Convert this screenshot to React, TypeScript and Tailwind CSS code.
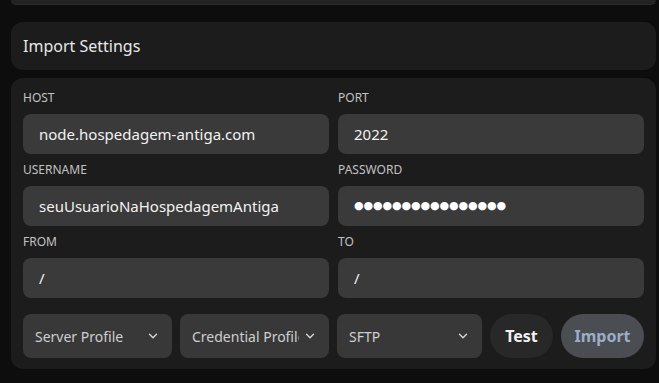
import React from 'react';
import { ChevronDown } from 'lucide-react';

const font = { fontFamily: '"Noto Sans", "Open Sans", sans-serif' };

const Field: React.FC<{ label: string; children: React.ReactNode }> = ({ label, children }) => (
  <div className="flex flex-col">
    <span className="text-[12px] leading-4 text-[#c2c2c2] mb-2">{label}</span>
    <div className="h-10 rounded-lg bg-[#3a3a3a] px-4 flex items-center text-[15px] text-[#f2f2f2]">
      {children}
    </div>
  </div>
);

const Select: React.FC<{ label: string; width: string }> = ({ label, width }) => (
  <div className={`${width} h-11 rounded-lg bg-[#383838] pl-3 pr-3 flex items-center justify-between text-[14px] text-[#cfcfcf] overflow-hidden`}>
    <span className="whitespace-nowrap overflow-hidden">{label}</span>
    <ChevronDown className="text-[#cfcfcf] shrink-0 ml-1" size={14} strokeWidth={2.5} />
  </div>
);

const App: React.FC = () => {
  return (
    <div className="w-full h-[383px] bg-[#0e0d0e] pl-[11px] pr-[3px] overflow-hidden" style={font}>
      {/* previous card, cut off at top */}
      <div className="h-[5px] bg-[#232323] rounded-b-xl border-b border-[#2a2a2a]"></div>

      <div className="mt-[17px] h-12 bg-[#1c1c1c] rounded-xl px-3 flex items-center">
        <h2 className="text-[16px] text-[#e8e8e8]">Import Settings</h2>
      </div>

      <div className="mt-2 bg-[#1c1c1c] rounded-xl px-3 pt-3 pb-[11px]">
        <div className="grid grid-cols-2 gap-x-[9px] gap-y-2">
          <Field label="HOST">node.hospedagem-antiga.com</Field>
          <Field label="PORT">2022</Field>
          <Field label="USERNAME">seuUsuarioNaHospedagemAntiga</Field>
          <Field label="PASSWORD">
            <span className="text-[11px] tracking-[-0.1px] text-white" style={{ fontFamily: '"DejaVu Sans", sans-serif' }}>
              ●●●●●●●●●●●●●●●●
            </span>
          </Field>
          <Field label="FROM">/</Field>
          <Field label="TO">/</Field>
        </div>

        <div className="mt-4 flex gap-2">
          <Select label="Server Profile" width="w-[149px]" />
          <Select label="Credential Profile" width="w-[149px]" />
          <Select label="SFTP" width="w-[145px]" />
          <button className="w-[63px] h-11 rounded-full bg-[#282828] text-[16px] font-bold text-[#f0f0f0]">Test</button>
          <button className="w-[83px] h-11 rounded-full bg-[#4a4d52] text-[16px] font-bold text-[#9badc8]">Import</button>
        </div>
      </div>
    </div>
  );
};

export default App;
